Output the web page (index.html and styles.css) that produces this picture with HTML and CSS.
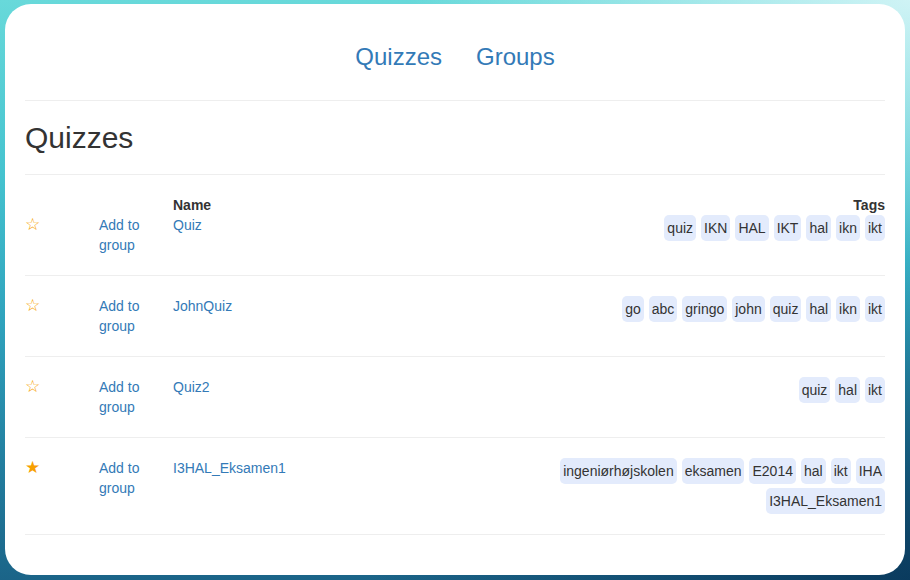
FILE: index.html
```html
<!DOCTYPE html>
<html>
<head>
<meta charset="utf-8">
<link rel="stylesheet" href="styles.css">
</head>
<body>
<div class="card">
  <nav class="nav">
    <a href="#">Quizzes</a>
    <a href="#">Groups</a>
  </nav>
  <h2 class="title">Quizzes</h2>
  <div class="list">
    <div class="row first">
      <div class="star">&#9734;</div>
      <div class="add"><a href="#">Add to group</a></div>
      <div class="name"><div class="head">Name</div><a href="#">Quiz</a></div>
      <div class="tags-col"><div class="head right">Tags</div>
        <div class="tags"><span>quiz</span><span>IKN</span><span>HAL</span><span>IKT</span><span>hal</span><span>ikn</span><span>ikt</span></div>
      </div>
    </div>
    <div class="row">
      <div class="star">&#9734;</div>
      <div class="add"><a href="#">Add to group</a></div>
      <div class="name"><a href="#">JohnQuiz</a></div>
      <div class="tags-col">
        <div class="tags"><span>go</span><span>abc</span><span>gringo</span><span>john</span><span>quiz</span><span>hal</span><span>ikn</span><span>ikt</span></div>
      </div>
    </div>
    <div class="row">
      <div class="star">&#9734;</div>
      <div class="add"><a href="#">Add to group</a></div>
      <div class="name"><a href="#">Quiz2</a></div>
      <div class="tags-col">
        <div class="tags"><span>quiz</span><span>hal</span><span>ikt</span></div>
      </div>
    </div>
    <div class="row">
      <div class="star">&#9733;</div>
      <div class="add"><a href="#">Add to group</a></div>
      <div class="name"><a href="#">I3HAL_Eksamen1</a></div>
      <div class="tags-col">
        <div class="tags"><span>ingeniørhøjskolen</span><span>eksamen</span><span>E2014</span><span>hal</span><span>ikt</span><span>IHA</span><span>I3HAL_Eksamen1</span></div>
      </div>
    </div>
  </div>
</div>
</body>
</html>
```

FILE: styles.css
```css
html, body {
  margin: 0;
  height: 100%;
}
body {
  font-family: "Liberation Sans", Arial, sans-serif;
  font-size: 14px;
  line-height: 20px;
  color: #333;
  padding: 4px 5px 5px 5px;
  box-sizing: border-box;
  background:
    radial-gradient(ellipse 55% 45% at 100% 0%, rgba(225,248,250,0.85), rgba(225,248,250,0) 100%),
    radial-gradient(ellipse 60% 55% at 100% 100%, rgba(5,45,80,0.75), rgba(5,45,80,0) 100%),
    linear-gradient(to bottom, #68d9da 0%, #45c3cf 30%, #2fa3bd 55%, #227e9f 80%, #1b6488 100%);
}
a {
  color: #337ab7;
  text-decoration: none;
}
.card {
  background: #fff;
  border-radius: 26px;
  height: 571px;
  padding: 0 20px;
  box-sizing: border-box;
  overflow: hidden;
}
.nav {
  display: flex;
  justify-content: center;
  gap: 34px;
  padding: 40px 0 30px;
  border-bottom: 1px solid #eee;
}
.nav a {
  font-size: 24px;
  line-height: 26px;
}
.title {
  margin: 0;
  padding: 20px 0 20px;
  font-size: 30px;
  line-height: 33px;
  font-weight: 500;
  border-bottom: 1px solid #eee;
}
.row {
  display: grid;
  grid-template-columns: 74px 74px 1fr auto;
  padding: 20px 0;
  border-bottom: 1px solid #eee;
  min-height: 40px;
}
.row.first .star,
.row.first .add {
  padding-top: 20px;
}
.star {
  color: #f7a000;
  font-size: 17px;
  line-height: 20px;
}
.add a {
  display: block;
  width: 60px;
}
.head {
  font-weight: bold;
  line-height: 20px;
}
.head.right {
  text-align: right;
}
.tags-col {
  display: flex;
  flex-direction: column;
  align-items: flex-end;
}
.tags {
  display: flex;
  flex-wrap: wrap;
  justify-content: flex-end;
  column-gap: 5px;
  row-gap: 4px;
  max-width: 330px;
}
.tags span {
  background: #e3ebfc;
  border-radius: 5px;
  padding: 3px 3px 3px;
  line-height: 20px;
  color: #333;
}
```
